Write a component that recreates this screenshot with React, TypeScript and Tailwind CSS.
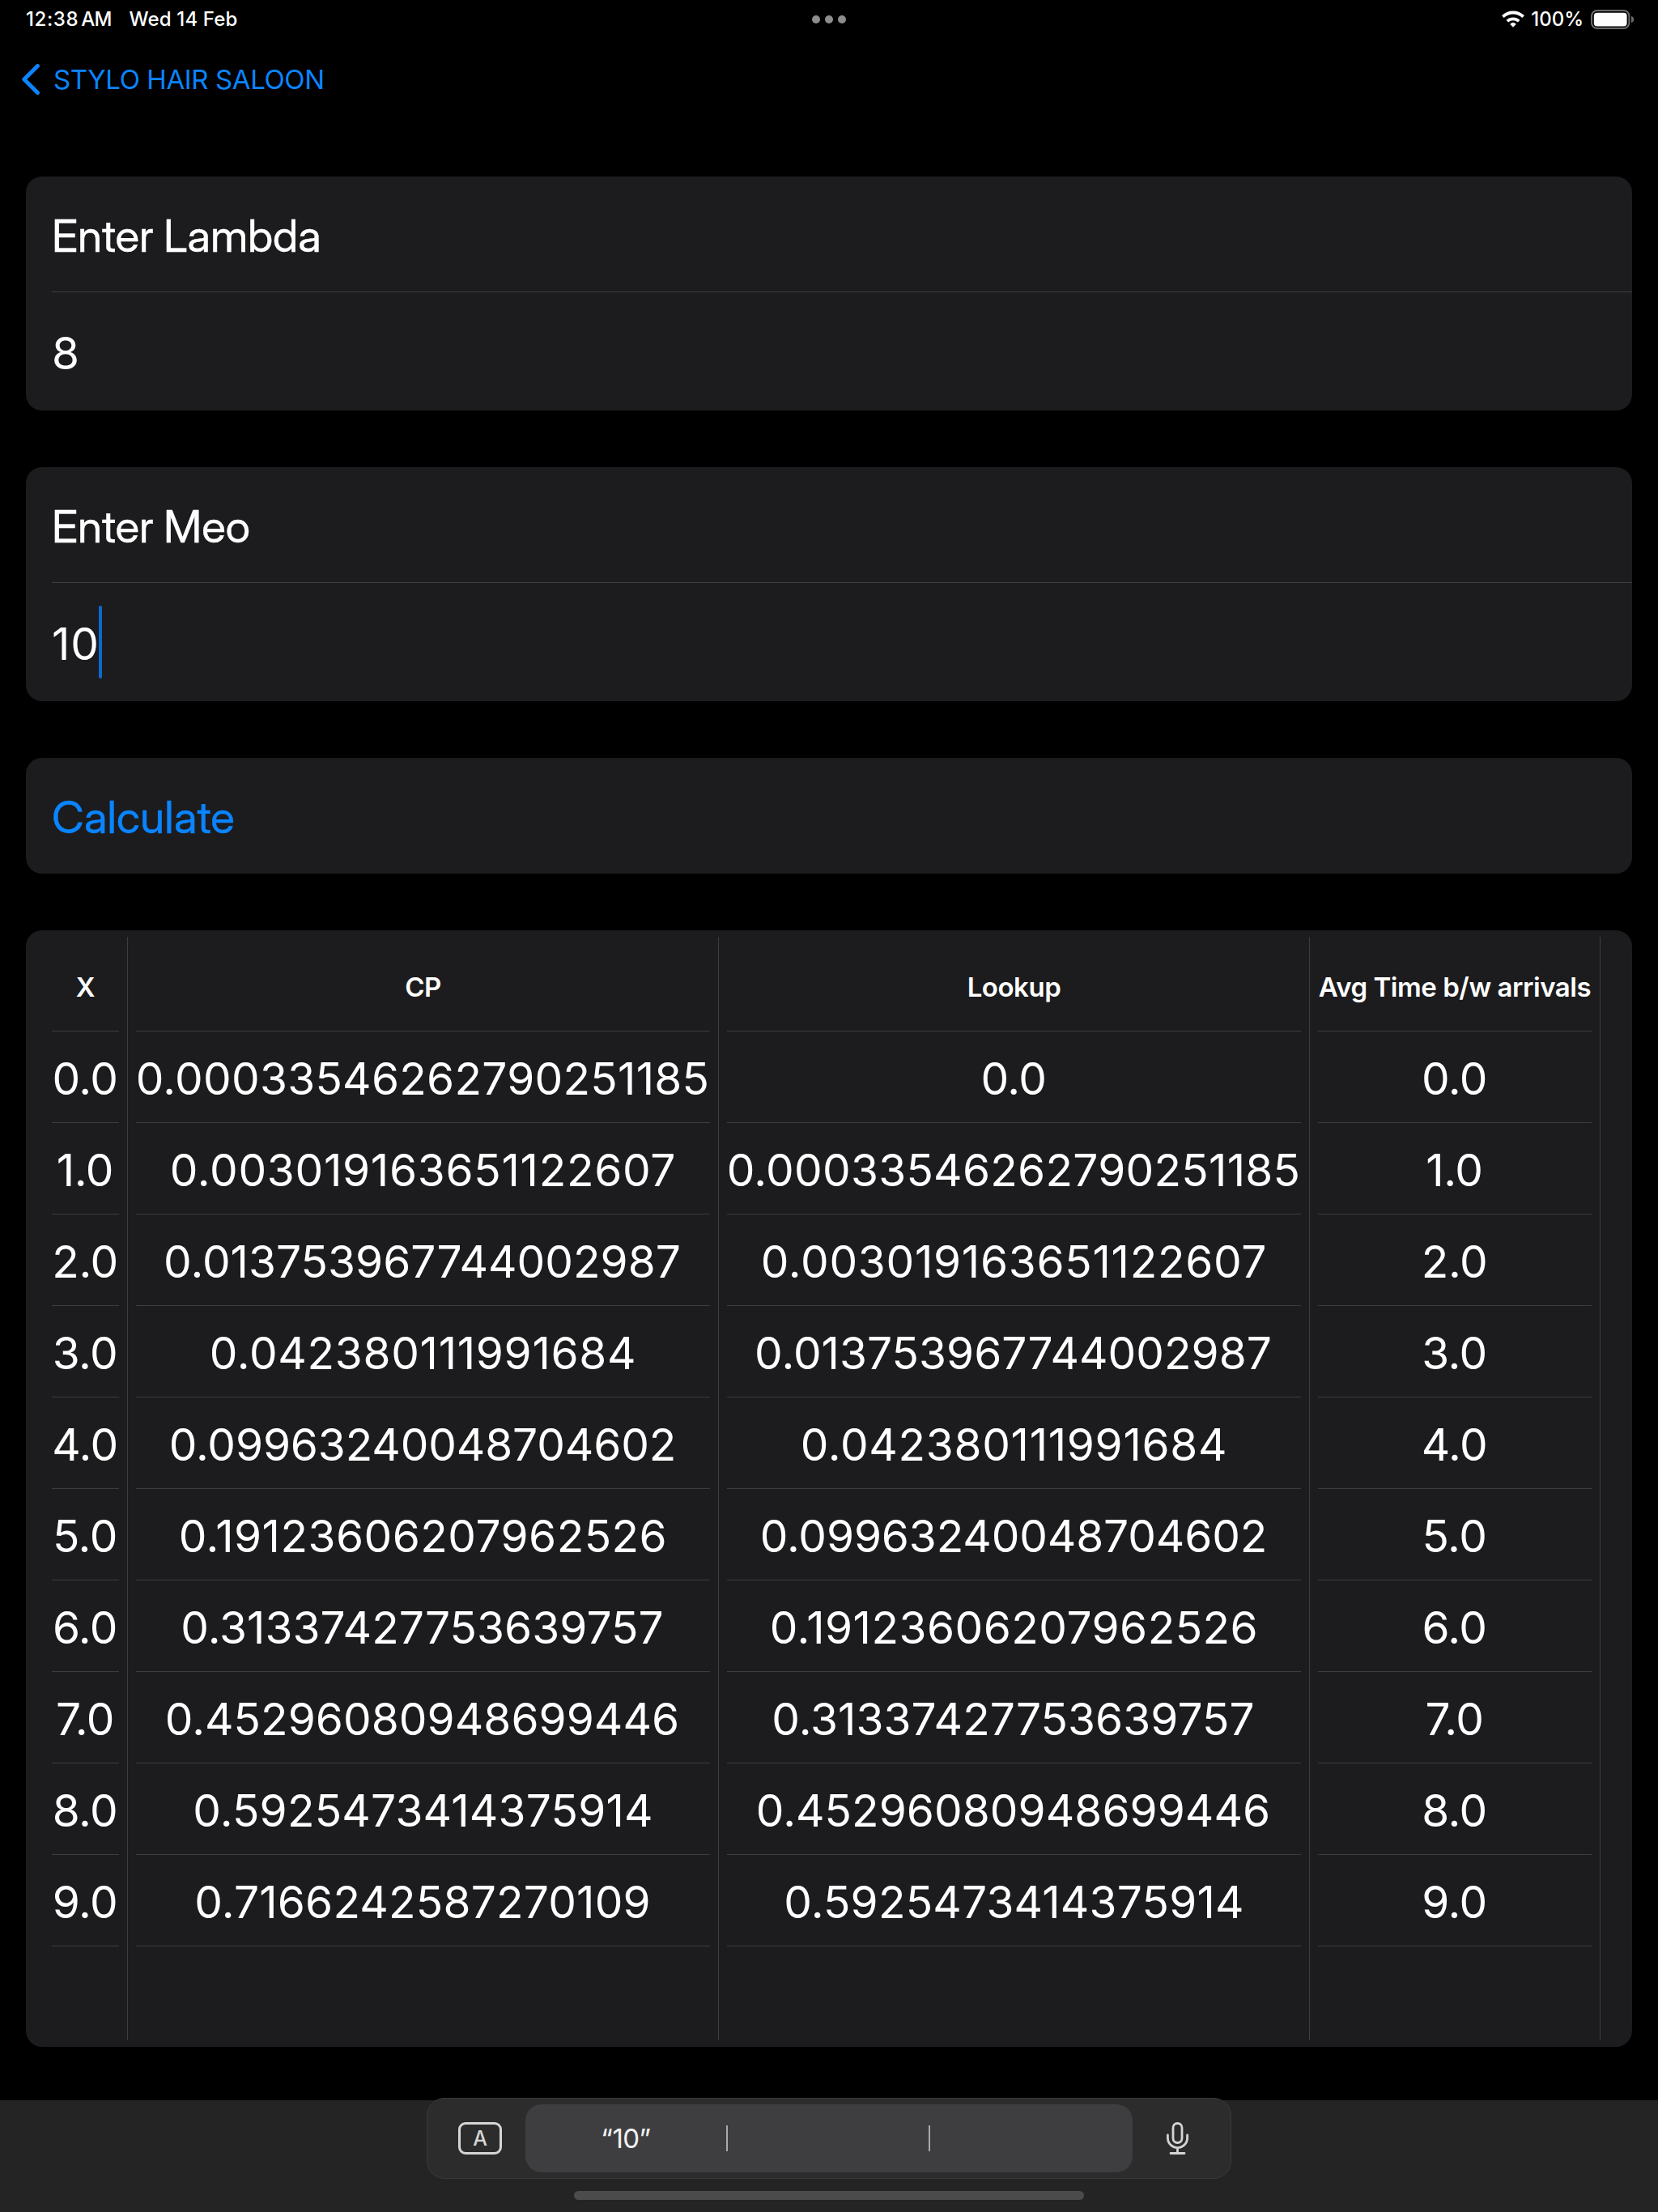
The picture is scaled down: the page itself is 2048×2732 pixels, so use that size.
import type { ReactNode } from "react";

const CP: [string, string][] = [
  ["0.00033546262790251185", "pr-px tracking-[0.27px]"],
  ["0.003019163651122607", "tracking-[0.72px]"],
  ["0.013753967744002987", "pr-0.5 tracking-[0.02px]"],
  ["0.042380111991684", "tracking-[0.7px]"],
  ["0.09963240048704602", "pr-px tracking-[-0.13px]"],
  ["0.19123606207962526", "tracking-[0.48px]"],
  ["0.31337427753639757", "pr-0.5 tracking-[0.05px]"],
  ["0.45296080948699446", "pr-0.5 tracking-[0.05px]"],
  ["0.5925473414375914", "tracking-[0.2px]"],
  ["0.7166242587270109", "pr-px tracking-[0.2px]"],
];
const INDEX: [string, string][] = CP.map((_, i) => [`${i}.0`, "pr-px tracking-[-0.4px]"]);
const LOOKUP: [string, string][] = [["0.0", "pr-px tracking-[-0.4px]"], ...CP.slice(0, 9)];

function StatusBar() {
  return (
    <header className="grid h-12 grid-cols-3 items-center px-8 text-2xl font-medium leading-none">
      <div className="flex">
        <span className="tracking-[0.6px]">12:38</span>
        <span className="ml-[3px] tracking-[-0.8px]">AM</span>
        <span className="ml-[22px] tracking-[0.15px]">Wed 14 Feb</span>
      </div>
      <div className="flex justify-center gap-1.5">
        <span className="size-2.5 rounded-full bg-[#8d8d8d]" />
        <span className="size-2.5 rounded-full bg-[#8d8d8d]" />
        <span className="size-2.5 rounded-full bg-[#8d8d8d]" />
      </div>
      <div className="-mr-[3px] flex items-center justify-end">
        <svg width="28" height="22" viewBox="0 0 28 22" fill="none" stroke="#fff">
          <path d="M1.4 7.6A18.1 18.1 0 0 1 26.6 7.6" strokeWidth="3.8" />
          <path d="M6.8 13.2A10.4 10.4 0 0 1 21.2 13.2" strokeWidth="3.7" />
          <path d="M14 20.3L10.6 16.8A5 5 0 0 1 17.4 16.8Z" fill="#fff" strokeWidth="0.8" strokeLinejoin="round" />
        </svg>
        <span className="ml-2">100%</span>
        <svg className="ml-[9px]" width="54" height="24" viewBox="0 0 54 24">
          <rect x="1" y="1" width="46.4" height="22" rx="6.8" fill="none" stroke="#6c6c6c" strokeWidth="2" />
          <rect x="3.8" y="3.8" width="40.8" height="16.6" rx="4" fill="#fff" />
          <path d="M50 7.8C52 8.6 53.2 10 53.2 12S52 15.4 50 16.2Z" fill="#6c6c6c" />
        </svg>
      </div>
    </header>
  );
}

function Card({ children }: { children: ReactNode }) {
  return <section className="rounded-[20px] bg-[#1c1c1e]">{children}</section>;
}

function Field({ label, value, caret }: { label: string; value: string; caret?: boolean }) {
  return (
    <Card>
      <div className="pl-8">
        <div className="flex h-[143px] items-center border-b border-[#3d3d41] pt-1 font-['Inter_Display'] text-[55px] leading-none [-webkit-text-stroke:0.4px] [word-spacing:-1.5px]">
          {label}
        </div>
        <div className="flex h-[146px] items-center pt-1 text-[55px] leading-none">
          <span className="tracking-[1px]">{value}</span>
          {caret && <span className="-ml-px -mt-1 h-[90px] w-1 rounded-full bg-[#0f68cb]" />}
        </div>
      </div>
    </Card>
  );
}

function Column({ title, cells, width }: { title: string; cells: [string, string][]; width: string }) {
  return (
    <div className={width}>
      <div className="flex h-[125px] items-center justify-center whitespace-nowrap border-b border-[#3d3d41] pt-4 text-[33px] font-semibold leading-none tracking-[-0.45px]">
        {title}
      </div>
      {cells.map(([text, tracking], i) => (
        <div
          key={i}
          className="flex h-[113px] items-center justify-center whitespace-nowrap border-b border-[#3d3d41] pt-1 text-[55px] leading-none"
        >
          <span className={tracking}>{text}</span>
        </div>
      ))}
    </div>
  );
}

function Rule() {
  return <div className="mx-2.5 my-2 w-px bg-[#3d3d41]" />;
}

function KeyboardBar() {
  return (
    <footer className="flex h-[138px] flex-col items-center bg-[#242424]">
      <div className="-mt-[3px] flex h-[100px] w-[994px] shrink-0 items-center rounded-[22px] border border-[#3a3a3a] bg-[#2c2c2c] pl-[38px]">
        <div className="flex h-10 w-[54px] items-center justify-center rounded-[9px] border-3 border-[#d6d6d6] text-[25px] font-medium leading-none text-[#d6d6d6]">
          A
        </div>
        <div className="ml-[29px] flex h-[84px] w-[750px] items-center rounded-[20px] bg-[#3e3e40]">
          <span className="w-[248px] text-center text-[33px] leading-none tracking-[-0.5px] text-[#f2f2f2]">“10”</span>
          <span className="h-8 w-0.5 bg-[#a9a9b1]" />
          <span className="ml-[248px] h-8 w-0.5 bg-[#a9a9b1]" />
        </div>
        <svg className="ml-[42px]" width="27" height="40" viewBox="0 0 27 40" fill="none" stroke="#d4d4d4" strokeWidth="2.8" strokeLinecap="round">
          <rect x="8" y="1.5" width="11" height="24" rx="5.5" />
          <path d="M1.4 16V19.5A12.1 12.1 0 0 0 25.6 19.5V16M13.5 31.6V38.5M5 38.5H22" />
        </svg>
      </div>
      <div className="mt-[15px] h-[11px] w-[630px] rounded-full bg-[#4b4b4b]" />
    </footer>
  );
}

export default function App() {
  return (
    <div className="flex h-[2732px] w-[2048px] flex-col overflow-hidden bg-black font-['Inter',sans-serif] text-white">
      <StatusBar />
      <nav className="flex h-[100px] items-center pl-[26px] text-[#0a84ff]">
        <svg width="24" height="40" viewBox="0 0 24 40" fill="none" stroke="currentColor" strokeWidth="5" strokeLinecap="round" strokeLinejoin="round">
          <path d="M20.4 3.5L3.8 20L20.4 36.5" />
        </svg>
        <span className="ml-4 text-[33px] leading-none tracking-[-0.4px]">STYLO HAIR SALOON</span>
      </nav>
      <main className="flex flex-1 flex-col gap-[70px] px-8 pt-[70px]">
        <Field label="Enter Lambda" value="8" />
        <Field label="Enter Meo" value="10" caret />
        <Card>
          <div className="flex h-[143px] items-center pl-8 pt-1 font-['Inter_Display'] text-[55px] leading-none tracking-[0.2px] text-[#0a84ff] [-webkit-text-stroke:0.4px]">
            Calculate
          </div>
        </Card>
        <Card>
          <div className="flex h-[1379px] pl-8">
            <Column title="X" cells={INDEX} width="w-[83px]" />
            <Rule />
            <Column title="CP" cells={CP} width="w-[709px]" />
            <Rule />
            <Column title="Lookup" cells={LOOKUP} width="w-[709px]" />
            <Rule />
            <Column title="Avg Time b/w arrivals" cells={INDEX} width="w-[338px]" />
            <Rule />
          </div>
        </Card>
      </main>
      <KeyboardBar />
    </div>
  );
}
